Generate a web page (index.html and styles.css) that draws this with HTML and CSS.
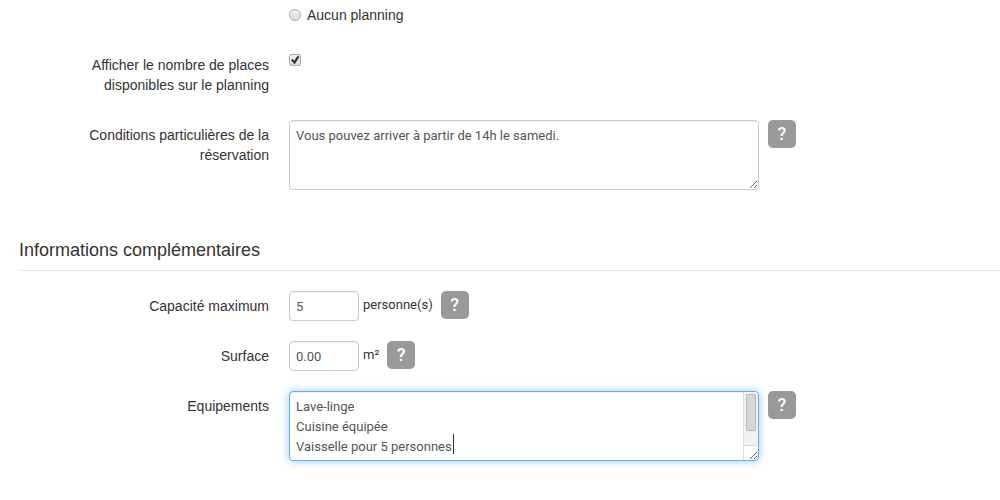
FILE: index.html
```html
<!DOCTYPE html>
<html lang="fr">
<head>
<meta charset="UTF-8">
<meta name="viewport" content="width=device-width, initial-scale=1.0">
<title>Informations complémentaires</title>
<link rel="stylesheet" href="styles.css">
</head>
<body>

<form class="form-horizontal">
    <div class="control-group">
        <div class="controls choice-line">
            <input type="radio" id="noPlanning" name="planning">
            <label for="noPlanning">Aucun planning</label>
        </div>
    </div>

    <div class="control-group">
        <label class="control-label" for="showPlaces">Afficher le nombre de places disponibles sur le planning</label>
        <div class="controls choice-line">
            <input type="checkbox" id="showPlaces" checked>
        </div>
    </div>

    <div class="control-group">
        <label class="control-label" for="conditions">Conditions particulières de la réservation</label>
        <div class="controls">
            <textarea id="conditions">Vous pouvez arriver à partir de 14h le samedi.</textarea>
            <button type="button" class="help wide-gap">?</button>
        </div>
    </div>

    <h2 class="legend">Informations complémentaires</h2>

    <div class="control-group">
        <label class="control-label" for="capacity">Capacité maximum</label>
        <div class="controls">
            <input type="text" id="capacity" value="5">
            <span class="unit">personne(s)</span>
            <button type="button" class="help">?</button>
        </div>
    </div>

    <div class="control-group">
        <label class="control-label" for="surface">Surface</label>
        <div class="controls">
            <input type="text" id="surface" value="0.00">
            <span class="unit">m²</span>
            <button type="button" class="help">?</button>
        </div>
    </div>

    <div class="control-group">
        <label class="control-label" for="equipment">Equipements</label>
        <div class="controls">
            <div class="active-field">
                <textarea id="equipment" class="active">Lave-linge
Cuisine équipée
Vaisselle pour 5 personnes
</textarea>
                <span class="caret"></span>
                <div class="scrollbar">
                    <div class="track">
                        <div class="thumb"></div>
                    </div>
                </div>
            </div>
            <button type="button" class="help wide-gap">?</button>
        </div>
    </div>
</form>

</body>
</html>
```
FILE: styles.css
```css
* {
    box-sizing: border-box;
}

body {
    margin: 0;
    padding-left: 19px;
    background-color: #fff;
    color: #333;
    font-family: "Liberation Sans", Arial, sans-serif;
    font-size: 14px;
    line-height: 20px;
}

.control-group {
    display: flex;
    margin-bottom: 20px;
}

.control-label {
    width: 190px;
    margin-left: 60px;
    padding: 5px 0;
    text-align: right;
}

.controls {
    display: flex;
    align-items: flex-start;
    flex: 1;
    margin-left: 20px;
}

.controls:first-child {
    margin-left: 270px;
}

.choice-line {
    padding: 5px 0;
}

.choice-line label {
    margin-left: 6px;
}

.choice-line input {
    appearance: none;
    width: 12px;
    height: 12px;
    margin: 4px 0 0;
    border: 1px solid #aaa;
    background: linear-gradient(#eee, #ddd);
}

.choice-line input[type="radio"] {
    border-radius: 50%;
}

.choice-line input[type="checkbox"] {
    margin-top: -1px;
    border-radius: 2px;
}

.choice-line input:checked::before {
    content: "";
    display: block;
    height: 10px;
    background-color: #333;
    clip-path: polygon(10% 52%, 26% 40%, 42% 58%, 76% 8%, 94% 20%, 46% 92%);
}

.legend {
    margin: 40px 0 20px;
    border-bottom: 1px solid #e5e5e5;
    font-size: 18px;
    font-weight: normal;
    line-height: 40px;
}

textarea,
input[type="text"] {
    margin: 0;
    padding: 4px 6px;
    border: 1px solid #ccc;
    border-radius: 4px;
    box-shadow: inset 0 1px 1px rgba(0, 0, 0, 0.075);
    color: #555;
    font-family: Roboto, sans-serif;
    font-size: 13px;
    line-height: 20px;
    outline: none;
}

textarea {
    display: block;
    width: 470px;
    height: 70px;
    padding-top: 5px;
    resize: both;
}

input[type="text"] {
    width: 70px;
    height: 30px;
}

.unit {
    margin: 4px 0 0 4px;
    font-family: Roboto, sans-serif;
    font-size: 13px;
}

.help {
    width: 28px;
    height: 28px;
    margin-left: 8px;
    padding: 0;
    border: none;
    border-radius: 5px;
    background-color: #999;
    color: #fff;
    font-family: Roboto, sans-serif;
    font-size: 18px;
    font-weight: 500;
    line-height: 28px;
    cursor: pointer;
}

.wide-gap {
    margin-left: 9px;
}

.active-field {
    position: relative;
}

.active {
    overflow-y: scroll;
    border-color: #66afe9;
    box-shadow: inset 0 1px 1px rgba(0, 0, 0, 0.075), 0 0 8px rgba(82, 168, 236, 0.6);
}

.caret {
    position: absolute;
    top: 43px;
    left: 164px;
    width: 1px;
    height: 20px;
    background-color: #333;
}

.scrollbar {
    position: absolute;
    top: 1px;
    right: 1px;
    bottom: 1px;
    width: 15px;
    border-left: 1px solid #ddd;
    pointer-events: none;
}

.track {
    height: 54px;
    padding: 2px;
    border-bottom: 1px solid #ddd;
    border-top-right-radius: 3px;
    background-color: #f1f1f1;
}

.thumb {
    height: 37px;
    border: 1px solid #bbb;
    border-radius: 1px;
    background-color: #d6d6d6;
}
```
